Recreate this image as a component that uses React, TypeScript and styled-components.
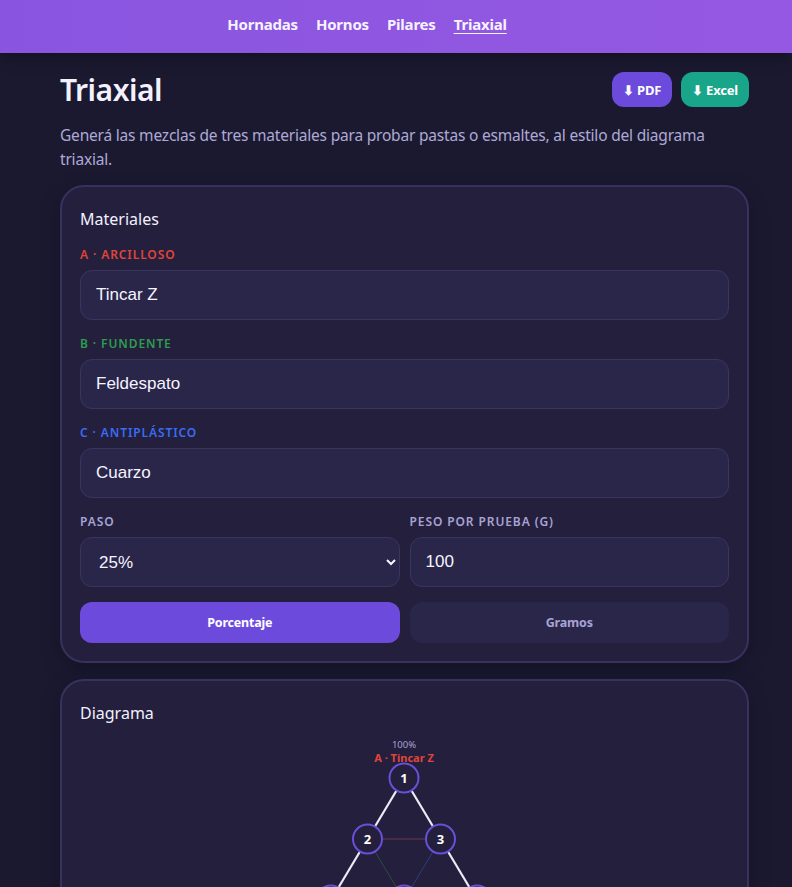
import React from "react";
import styled, { createGlobalStyle } from "styled-components";

/* global */
const GlobalStyle = createGlobalStyle`
  * { box-sizing: border-box; }
  body {
    margin: 0;
    background: #1b1930;
    color: #f0eefc;
    font-family: "Noto Sans", "Open Sans", sans-serif;
  }
`;

/* header */
const Header = styled.header`
  height: 53px;
  background: linear-gradient(90deg, #8955e0, #9558e2);
  box-shadow: 0 4px 14px rgba(0, 0, 0, 0.35);
  display: flex;
  justify-content: center;
  align-items: center;
  padding: 0 58px 6px 0;
  gap: 18px;
`;

const NavLink = styled.a<{ $active?: boolean }>`
  color: #f6f2ff;
  font-weight: 700;
  font-size: 15px;
  text-decoration: ${(p) => (p.$active ? "underline" : "none")};
  text-underline-offset: 3px;
  letter-spacing: -0.2px;
`;

/* page */
const Main = styled.main`
  padding: 16px 43px 40px 60px;
`;

const TitleRow = styled.div`
  display: flex;
  justify-content: space-between;
  align-items: center;
`;

const Title = styled.h1`
  margin: 0;
  font-size: 30px;
  font-weight: 600;
  letter-spacing: -0.5px;
  color: #f3f1fd;
`;

const Actions = styled.div`
  display: flex;
  gap: 9px;
`;

const ExportButton = styled.button<{ $color: string }>`
  height: 35px;
  padding: 0 11px;
  border: none;
  border-radius: 12px;
  background: ${(p) => p.$color};
  color: #fff;
  font-family: inherit;
  font-weight: 700;
  font-size: 13px;
  letter-spacing: -0.2px;
`;

const Intro = styled.p`
  margin: 13px 0 14px;
  font-size: 15.5px;
  line-height: 24px;
  color: #aea9d6;
  letter-spacing: -0.2px;
`;

const Card = styled.section`
  background: #231f3d;
  border: 2px solid #38315e;
  border-radius: 24px;
  padding: 21px 18px 18px;
  margin-bottom: 16px;
  box-shadow: 0 6px 20px rgba(0, 0, 0, 0.25);
`;

const CardTitle = styled.h2`
  margin: 0 0 17px;
  font-size: 16px;
  line-height: 22px;
  font-weight: 400;
  color: #f3f1fd;
`;

const Stack = styled.div`
  display: flex;
  flex-direction: column;
  gap: 16px;
`;

const Field = styled.label`
  display: flex;
  flex-direction: column;
  gap: 7px;
  min-width: 0;
`;

const FieldLabel = styled.span<{ $color: string }>`
  font-size: 12px;
  line-height: 16px;
  font-weight: 600;
  letter-spacing: 0.9px;
  text-transform: uppercase;
  color: ${(p) => p.$color};
`;

const TextInput = styled.input`
  height: 50px;
  width: 100%;
  padding: 0 15px;
  background: #29264a;
  border: 1px solid #3a355f;
  border-radius: 12px;
  color: #f6f4ff;
  font-family: "Liberation Sans", Arial, sans-serif;
  font-size: 17px;
  outline: none;
`;

const Select = styled.select`
  height: 50px;
  width: 100%;
  padding: 0 10px 0 14px;
  background: #29264a;
  border: 1px solid #3a355f;
  border-radius: 12px;
  color: #f6f4ff;
  font-family: "Liberation Sans", Arial, sans-serif;
  font-size: 17px;
  outline: none;
  color-scheme: dark;
`;

const TwoCols = styled.div<{ $top?: number }>`
  display: grid;
  grid-template-columns: 1fr 1fr;
  gap: 10px;
  margin-top: ${(p) => p.$top ?? 0}px;
`;

const ModeButton = styled.button<{ $active?: boolean }>`
  height: 41px;
  border: none;
  border-radius: 12px;
  background: ${(p) => (p.$active ? "#6c4bdc" : "#29264a")};
  color: ${(p) => (p.$active ? "#fff" : "#a8a3d2")};
  font-family: inherit;
  font-weight: 700;
  font-size: 12.5px;
  letter-spacing: -0.2px;
`;

const DiagramWrap = styled.div`
  display: flex;
  justify-content: center;
  margin-top: -8px;
`;

/* diagram */
const STEP_X = 73;
const STEP_Y = 61;
const ROWS = 5;
const CX = 324;
const TOP = 45;

const pos = (i: number, j: number) => ({
  x: CX + (j - i / 2) * STEP_X,
  y: TOP + i * STEP_Y,
});

const Triangle: React.FC = () => {
  const lines: JSX.Element[] = [];
  const nodes: JSX.Element[] = [];
  let n = 1;
  for (let i = 0; i < ROWS; i++) {
    for (let j = 0; j <= i; j++) {
      const p = pos(i, j);
      if (j < i) {
        const q = pos(i, j + 1);
        const outer = i === ROWS - 1;
        lines.push(
          <line key={`h${i}${j}`} x1={p.x} y1={p.y} x2={q.x} y2={q.y}
            stroke={outer ? "#eeeaf8" : "#6a3a52"} strokeWidth={outer ? 2.2 : 1} />
        );
      }
      if (i < ROWS - 1) {
        const dl = pos(i + 1, j);
        const dr = pos(i + 1, j + 1);
        lines.push(
          <line key={`l${i}${j}`} x1={p.x} y1={p.y} x2={dl.x} y2={dl.y}
            stroke={j === 0 ? "#eeeaf8" : "#2c3f78"} strokeWidth={j === 0 ? 2.2 : 1} />
        );
        lines.push(
          <line key={`r${i}${j}`} x1={p.x} y1={p.y} x2={dr.x} y2={dr.y}
            stroke={j === i ? "#eeeaf8" : "#26503e"} strokeWidth={j === i ? 2.2 : 1} />
        );
      }
      nodes.push(
        <g key={`n${n}`}>
          <circle cx={p.x} cy={p.y} r={14.5} fill="#231f3d" stroke="#6a4fd8" strokeWidth={2} />
          <text x={p.x} y={p.y + 4.5} textAnchor="middle" fontSize="13" fontWeight="700"
            fill="#ffffff" fontFamily="Noto Sans, sans-serif">{n}</text>
        </g>
      );
      n++;
    }
  }
  const bl = pos(ROWS - 1, 0);
  const br = pos(ROWS - 1, ROWS - 1);
  return (
    <svg width="649" height="350" viewBox="0 0 649 350">
      <text x={CX} y={15} textAnchor="middle" fontSize="9.5" fill="#a8a3d2"
        fontFamily="Noto Sans, sans-serif">100%</text>
      <text x={CX} y={29} textAnchor="middle" fontSize="11" fontWeight="700" fill="#e0453a"
        fontFamily="Noto Sans, sans-serif">A · Tincar Z</text>
      {lines}
      {nodes}
      <text x={bl.x} y={bl.y + 32} textAnchor="middle" fontSize="11" fontWeight="700" fill="#2e9c4e"
        fontFamily="Noto Sans, sans-serif">B · Feldespato</text>
      <text x={bl.x} y={bl.y + 45} textAnchor="middle" fontSize="9.5" fill="#a8a3d2"
        fontFamily="Noto Sans, sans-serif">100%</text>
      <text x={br.x} y={br.y + 32} textAnchor="middle" fontSize="11" fontWeight="700" fill="#3b6cf0"
        fontFamily="Noto Sans, sans-serif">C · Cuarzo</text>
      <text x={br.x} y={br.y + 45} textAnchor="middle" fontSize="9.5" fill="#a8a3d2"
        fontFamily="Noto Sans, sans-serif">100%</text>
    </svg>
  );
};

/* app */
const materials = [
  { label: "A · Arcilloso", color: "#e0453a", value: "Tincar Z" },
  { label: "B · Fundente", color: "#2e9c4e", value: "Feldespato" },
  { label: "C · Antiplástico", color: "#3b6cf0", value: "Cuarzo" },
];

const App: React.FC = (): JSX.Element => {
  return (
    <>
      <GlobalStyle />
      <Header>
        <NavLink>Hornadas</NavLink>
        <NavLink>Hornos</NavLink>
        <NavLink>Pilares</NavLink>
        <NavLink $active>Triaxial</NavLink>
      </Header>
      <Main>
        <TitleRow>
          <Title>Triaxial</Title>
          <Actions>
            <ExportButton $color="#6c4bdc">⬇ PDF</ExportButton>
            <ExportButton $color="#18a589">⬇ Excel</ExportButton>
          </Actions>
        </TitleRow>
        <Intro>
          Generá las mezclas de tres materiales para probar pastas o esmaltes, al estilo del diagrama triaxial.
        </Intro>

        <Card>
          <CardTitle>Materiales</CardTitle>
          <Stack>
            {materials.map((m) => (
              <Field key={m.label}>
                <FieldLabel $color={m.color}>{m.label}</FieldLabel>
                <TextInput defaultValue={m.value} />
              </Field>
            ))}
            <TwoCols>
              <Field>
                <FieldLabel $color="#a8a3d2">Paso</FieldLabel>
                <Select defaultValue="25">
                  <option value="10">10%</option>
                  <option value="20">20%</option>
                  <option value="25">25%</option>
                </Select>
              </Field>
              <Field>
                <FieldLabel $color="#a8a3d2">Peso por prueba (g)</FieldLabel>
                <TextInput defaultValue="100" />
              </Field>
            </TwoCols>
          </Stack>
          <TwoCols $top={15}>
            <ModeButton $active>Porcentaje</ModeButton>
            <ModeButton>Gramos</ModeButton>
          </TwoCols>
        </Card>

        <Card>
          <CardTitle>Diagrama</CardTitle>
          <DiagramWrap>
            <Triangle />
          </DiagramWrap>
        </Card>
      </Main>
    </>
  );
};

export default App;
